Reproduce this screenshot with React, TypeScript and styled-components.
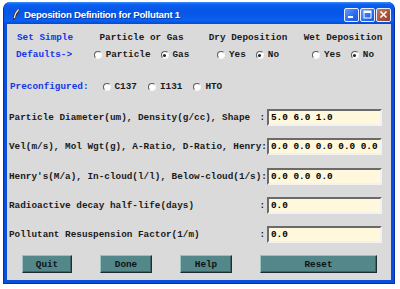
import styled, { createGlobalStyle } from "styled-components";

const GlobalStyle = createGlobalStyle`
  body {
    margin: 0;
    background: #ffffff;
  }
`;

const Window = styled.div`
  margin: 2px 0 0 3px;
  width: 392px;
  height: 282px;
  display: flex;
  flex-direction: column;
  box-sizing: border-box;
  background: #0a4fdc;
  border-radius: 7px 7px 0 0;
  border: 1px solid #0831a8;
  border-top: none;
  overflow: hidden;
`;

const TitleBar = styled.div`
  height: 22px;
  display: flex;
  align-items: center;
  padding: 3px 3px 0 8px;
  box-sizing: border-box;
  background: linear-gradient(
    to bottom,
    #3c8cf8 0%,
    #0a5ff0 12%,
    #0655e6 45%,
    #0a60f2 85%,
    #0549d4 100%
  );
`;

const Title = styled.span`
  flex: 1;
  margin-left: 4px;
  color: #ffffff;
  font-family: "Liberation Sans", Arial, sans-serif;
  font-weight: bold;
  font-size: 9.7px;
  letter-spacing: -0.25px;
  text-shadow: 1px 1px 0 #0a3aa0;
  white-space: nowrap;
`;

const TitleButtons = styled.div`
  display: flex;
  gap: 1px;
`;

const CaptionButton = styled.div<{ $close?: boolean }>`
  width: 15px;
  height: 14px;
  box-sizing: border-box;
  border: 1px solid #e8eefc;
  border-radius: 2px;
  background: ${(p) =>
    p.$close
      ? "linear-gradient(135deg, #c87a5c 0%, #a9523a 60%, #8c3e2a 100%)"
      : "linear-gradient(135deg, #6b9cf5 0%, #2c6ef0 55%, #1f55d8 100%)"};
  display: flex;
  align-items: center;
  justify-content: center;
`;

const Body = styled.div`
  flex: 1;
  margin: 0 3px 3px 3px;
  background: #dadada;
  padding: 8px 0 0 2px;
  font-family: "Liberation Mono", monospace;
  font-weight: bold;
  font-size: 9.35px;
  color: #1a1a1a;
  white-space: pre;
`;

const DefaultsGrid = styled.div`
  display: grid;
  grid-template-columns: 81px 103px 110px 80px;
  grid-template-rows: 12px 12px;
  row-gap: 5px;
  align-items: center;
  justify-items: center;
`;

const BlueText = styled.span<{ $indent?: number }>`
  color: #1536e6;
  justify-self: start;
  padding-left: ${(p) => p.$indent ?? 0}px;
  line-height: 12px;
`;

const Header = styled.span`
  line-height: 12px;
`;

const RadioGroup = styled.div<{ $gap?: number }>`
  display: flex;
  align-items: center;
  gap: ${(p) => p.$gap ?? 10}px;
`;

const Option = styled.label`
  display: flex;
  align-items: center;
  gap: 4px;
  line-height: 12px;
`;

const RadioDot = styled.span<{ $on?: boolean }>`
  width: 8px;
  height: 8px;
  box-sizing: border-box;
  border-radius: 50%;
  background: #ffffff;
  border: 1px solid;
  border-color: #5c5c5c #f4f4f4 #f4f4f4 #5c5c5c;
  display: flex;
  align-items: center;
  justify-content: center;
  &::after {
    content: "";
    width: 3px;
    height: 3px;
    border-radius: 50%;
    background: ${(p) => (p.$on ? "#222222" : "transparent")};
  }
`;

const PresetRow = styled.div`
  display: flex;
  align-items: center;
  margin-top: 20px;
  height: 12px;
  gap: 14px;
`;

const FieldList = styled.div`
  display: flex;
  flex-direction: column;
  gap: 12.25px;
  margin-top: 16px;
`;

const FieldRow = styled.div`
  display: flex;
  align-items: center;
  height: 17px;
`;

const FieldLabel = styled.div`
  width: 258px;
  display: flex;
  justify-content: space-between;
  padding-right: 2px;
  box-sizing: border-box;
`;

const Entry = styled.div`
  width: 115px;
  height: 17px;
  box-sizing: border-box;
  background: #fff8dc;
  border: 2px solid;
  border-color: #6a6a6a #f2f2f2 #f2f2f2 #6a6a6a;
  padding-left: 2px;
  line-height: 13px;
  color: #000000;
  overflow: hidden;
`;

const ButtonRow = styled.div`
  display: flex;
  gap: 28px;
  margin-top: 12px;
  padding-left: 13px;
`;

const Button = styled.div<{ $w: number }>`
  width: ${(p) => p.$w}px;
  height: 18px;
  box-sizing: border-box;
  background: #53878a;
  border: 1px solid;
  border-color: #9fc0c2 #1e2e30 #1e2e30 #9fc0c2;
  box-shadow: inset -1px -1px 0 #3d6467;
  display: flex;
  align-items: center;
  justify-content: center;
  color: #0c1414;
`;

const Quill = () => (
  <svg width="8" height="14" viewBox="0 0 8 14">
    <path d="M7.5 0.5 C4 2 1.2 5.5 1 11 L1.6 13.5 L2.6 11 C5 8 7 4.5 7.5 0.5 Z" fill="#4a3226" />
    <path d="M6.5 1.5 C4.5 3.5 3 6.5 2.2 10" stroke="#f4ece4" strokeWidth="1.2" fill="none" />
  </svg>
);

const fields = [
  ["Particle Diameter(um), Density(g/cc), Shape", "5.0 6.0 1.0"],
  ["Vel(m/s), Mol Wgt(g), A-Ratio, D-Ratio, Henry", "0.0 0.0 0.0 0.0 0.0"],
  ["Henry's(M/a), In-cloud(l/l), Below-cloud(1/s)", "0.0 0.0 0.0"],
  ["Radioactive decay half-life(days)", "0.0"],
  ["Pollutant Resuspension Factor(1/m)", "0.0"],
];

const buttons: [string, number][] = [
  ["Quit", 50],
  ["Done", 52],
  ["Help", 52],
  ["Reset", 117],
];

const Radio = ({ label, on }: { label: string; on?: boolean }) => (
  <Option>
    <RadioDot $on={on} />
    {label}
  </Option>
);

export default function App() {
  return (
    <>
      <GlobalStyle />
      <Window>
        <TitleBar>
          <Quill />
          <Title>Deposition Definition for Pollutant 1</Title>
          <TitleButtons>
            <CaptionButton>
              <svg width="9" height="9" viewBox="0 0 9 9">
                <rect x="1" y="6" width="5" height="2" fill="#fff" />
              </svg>
            </CaptionButton>
            <CaptionButton>
              <svg width="9" height="9" viewBox="0 0 9 9">
                <rect x="1" y="1" width="7" height="7" fill="none" stroke="#fff" strokeWidth="1" />
                <rect x="1" y="1" width="7" height="2" fill="#fff" />
              </svg>
            </CaptionButton>
            <CaptionButton $close>
              <svg width="9" height="9" viewBox="0 0 9 9">
                <path d="M1.5 1.5 L7.5 7.5 M7.5 1.5 L1.5 7.5" stroke="#fff" strokeWidth="1.6" />
              </svg>
            </CaptionButton>
          </TitleButtons>
        </TitleBar>
        <Body>
          <DefaultsGrid>
            <BlueText $indent={8}>Set Simple</BlueText>
            <Header>Particle or Gas</Header>
            <Header>Dry Deposition</Header>
            <Header>Wet Deposition</Header>
            <BlueText $indent={7}>{"Defaults->"}</BlueText>
            <RadioGroup>
              <Radio label="Particle" />
              <Radio label="Gas" on />
            </RadioGroup>
            <RadioGroup>
              <Radio label="Yes" />
              <Radio label="No" on />
            </RadioGroup>
            <RadioGroup>
              <Radio label="Yes" />
              <Radio label="No" on />
            </RadioGroup>
          </DefaultsGrid>
          <PresetRow>
            <BlueText $indent={1}>Preconfigured:</BlueText>
            <RadioGroup $gap={11}>
              <Radio label="C137" />
              <Radio label="I131" />
              <Radio label="HTO" />
            </RadioGroup>
          </PresetRow>
          <FieldList>
            {fields.map(([label, value]) => (
              <FieldRow key={label}>
                <FieldLabel>
                  <span>{label}</span>
                  <span>:</span>
                </FieldLabel>
                <Entry>{value}</Entry>
              </FieldRow>
            ))}
          </FieldList>
          <ButtonRow>
            {buttons.map(([label, w]) => (
              <Button key={label} $w={w}>
                {label}
              </Button>
            ))}
          </ButtonRow>
        </Body>
      </Window>
    </>
  );
}
